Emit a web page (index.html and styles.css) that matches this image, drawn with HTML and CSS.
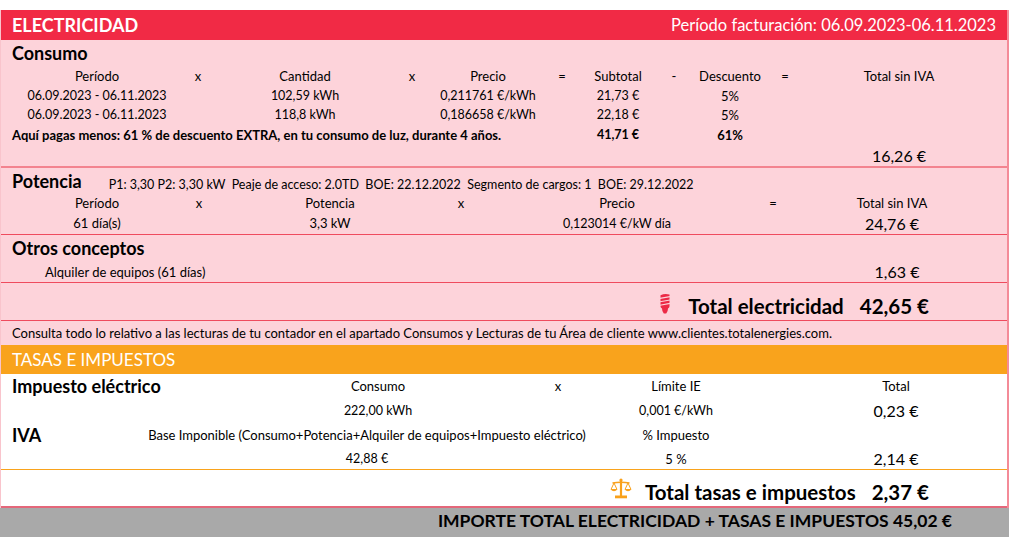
FILE: index.html
```html
<!DOCTYPE html>
<html lang="es">
<head>
<meta charset="utf-8">
<title>Electricidad</title>
<link rel="stylesheet" href="styles.css">
</head>
<body>
<div class="invoice">
  <div class="panel">
    <div class="bar-red">
      <span class="bar-title">ELECTRICIDAD</span>
      <span class="bar-period">Período facturación: 06.09.2023-06.11.2023</span>
    </div>

    <section class="sec pink sec-consumo">
      <h2 class="sec-title">Consumo</h2>
      <div class="grid g-consumo">
        <span></span><span>Período</span><span>x</span><span>Cantidad</span><span>x</span><span>Precio</span><span>=</span><span>Subtotal</span><span>-</span><span>Descuento</span><span>=</span><span>Total sin IVA</span>
        <span></span><span class="num">06.09.2023 - 06.11.2023</span><span></span><span class="num">102,59 kWh</span><span></span><span class="num">0,211761 €/kWh</span><span></span><span class="num">21,73 €</span><span></span><span>5%</span><span></span><span></span>
        <span></span><span class="num">06.09.2023 - 06.11.2023</span><span></span><span class="num">118,8 kWh</span><span></span><span class="num">0,186658 €/kWh</span><span></span><span class="num">22,18 €</span><span></span><span>5%</span><span></span><span></span>
        <span class="note">Aquí pagas menos: 61 % de descuento EXTRA, en tu consumo de luz, durante 4 años.</span><span></span><span class="b num">41,71 €</span><span></span><span class="b">61%</span><span></span><span></span>
        <span class="big col-total">16,26 €</span>
      </div>
    </section>

    <section class="sec pink sec-line">
      <div class="title-row">
        <h2 class="sec-title">Potencia</h2>
        <span class="pot-info">P1: 3,30 P2: 3,30 kW  Peaje de acceso: 2.0TD  BOE: 22.12.2022  Segmento de cargos: 1  BOE: 29.12.2022</span>
      </div>
      <div class="grid g-pot">
        <span></span><span>Período</span><span>x</span><span>Potencia</span><span>x</span><span>Precio</span><span>=</span><span>Total sin IVA</span>
        <span></span><span>61 día(s)</span><span></span><span>3,3 kW</span><span></span><span class="num">0,123014 €/kW día</span><span></span><span class="big">24,76 €</span>
      </div>
    </section>

    <section class="sec pink sec-line">
      <h2 class="sec-title">Otros conceptos</h2>
      <div class="grid g-otros">
        <span></span><span class="left">Alquiler de equipos (61 días)</span><span class="big">1,63 €</span>
      </div>
    </section>

    <section class="sec pink sec-line total-row total-el">
      <svg class="ico-bulb" viewBox="0 0 12 22" width="12" height="22" aria-hidden="true">
        <path d="M1.5 2.2 Q6 0.2 10.5 1.6 L10.5 13.2 Q10.5 14.8 9 15.4 L8.6 18 L7.2 20.6 L4.8 20.6 L3.4 18 L3 15.4 Q1.5 14.8 1.5 13.2 Z" fill="#ec2a46"/>
        <path d="M1 5.4 L11 3.6 M1 8.8 L11 7 M1 12.2 L11 10.4" stroke="#fdd3da" stroke-width="1.1"/>
      </svg>
      <span class="total-label">Total electricidad</span>
      <span class="total-value">42,65 €</span>
    </section>

    <div class="pink consulta">Consulta todo lo relativo a las lecturas de tu contador en el apartado Consumos y Lecturas de tu Área de cliente www.clientes.totalenergies.com.</div>

    <div class="bar-orange">TASAS E IMPUESTOS</div>

    <section class="sec white sec-tax">
      <div class="grid g-tax">
        <span class="tax-title">Impuesto eléctrico</span><span>Consumo</span><span></span><span>x</span><span></span><span>Límite IE</span><span></span><span>Total</span>
        <span></span><span class="num">222,00 kWh</span><span></span><span></span><span></span><span class="num">0,001 €/kWh</span><span></span><span class="big">0,23 €</span>
        <span class="tax-title">IVA</span><span class="shift">Base Imponible (Consumo+Potencia+Alquiler de equipos+Impuesto eléctrico)</span><span></span><span></span><span></span><span>% Impuesto</span><span></span><span></span>
        <span></span><span class="shift num">42,88 €</span><span></span><span></span><span></span><span>5 %</span><span></span><span class="big">2,14 €</span>
      </div>
    </section>

    <section class="sec white total-row total-tax">
      <svg class="ico-scale" viewBox="0 0 22 21" width="22" height="21" aria-hidden="true">
        <circle cx="11" cy="2" r="1.6" fill="#f9a11b"/>
        <path d="M11 2 V18" stroke="#f9a11b" stroke-width="2.2" fill="none"/>
        <path d="M2.5 5 Q11 3.4 19.5 5" stroke="#f9a11b" stroke-width="1.6" fill="none"/>
        <path d="M1.2 11 L4 5 L6.8 11 M15.2 11 L18 5 L20.8 11" stroke="#f9a11b" stroke-width="1" fill="none"/>
        <path d="M0.3 11 H7.7 Q4 15.6 0.3 11 Z M14.3 11 H21.7 Q18 15.6 14.3 11 Z" fill="#f9a11b"/>
        <rect x="5" y="17.5" width="12" height="2.8" fill="#f9a11b"/>
      </svg>
      <span class="total-label">Total tasas e impuestos</span>
      <span class="total-value">2,37 €</span>
    </section>
  </div>
  <div class="bar-grey">IMPORTE TOTAL ELECTRICIDAD + TASAS E IMPUESTOS 45,02 €</div>
</div>
</body>
</html>
```

FILE: styles.css
```css
* {
  box-sizing: border-box;
  margin: 0;
  padding: 0;
}

body {
  margin: 0;
  background: #ffffff;
  font-family: Lato, "Open Sans", sans-serif;
  font-size: 13px;
  color: #000000;
}

.invoice {
  width: 1009px;
  margin-top: 10px;
}

.panel {
  border-left: 1px solid #f9c4cc;
  border-right: 2px solid #f48b98;
}

.pink {
  background: #fdd3da;
}

.white {
  background: #ffffff;
}

/* header bars */
.bar-red {
  height: 30px;
  background: #f12a45;
  color: #ffffff;
  display: flex;
  align-items: center;
  justify-content: space-between;
  padding: 0 11px 0 11px;
}

.bar-title {
  font-size: 18px;
  font-weight: 700;
}

.bar-period {
  font-size: 16.5px;
}

.bar-orange {
  height: 29px;
  line-height: 29px;
  background: #f9a31c;
  color: #ffffff;
  font-size: 17px;
  padding-left: 11px;
}

.bar-grey {
  height: 29px;
  line-height: 25px;
  background: #a9a9a9;
  font-size: 17.5px;
  font-weight: 700;
  text-align: right;
  padding-right: 57px;
}

/* sections */
.sec-consumo {
  border-bottom: 2px solid #f3838f;
}

.sec-line {
  border-bottom: 1px solid #ef4b5e;
}

.sec-title {
  font-size: 18px;
  font-weight: 700;
  line-height: 26px;
  padding-left: 11px;
}

.title-row {
  display: flex;
  align-items: baseline;
  height: 26px;
}

.pot-info {
  white-space: pre;
  font-size: 12.5px;
  margin-left: 27px;
  position: relative;
  top: 1px;
}

.grid {
  display: grid;
  align-items: center;
}

.grid > span {
  justify-self: center;
  white-space: nowrap;
}

.grid > span.left,
.grid > span.note,
.grid > span.tax-title {
  justify-self: start;
}

.num {
  font-size: 12.5px;
}

.b {
  font-weight: 700;
}

.big {
  font-size: 16px;
}

.g-consumo {
  grid-template-columns: 21px 150px 52px 162px 52px 100px 48px 64px 48px 64px 46px 182px;
  grid-template-rows: 20px 19px 19px 21px 21px;
}

.note {
  grid-column: 1 / 7;
  padding-left: 11px;
  font-weight: 700;
}

.col-total {
  grid-column: 12;
}

.g-pot {
  grid-template-columns: 21px 150px 54px 208px 54px 258px 54px 184px;
  grid-template-rows: 18px 22px;
}

.g-otros {
  grid-template-columns: 44px 802px 100px;
  grid-template-rows: 21px;
}

.g-tax {
  grid-template-columns: 301px 152px 94px 20px 58px 100px 120px 100px;
  grid-template-rows: 24px 24px 26px 21px;
}

.sec-tax {
  border-bottom: 1px solid #f9a31c;
}

.tax-title {
  font-size: 18px;
  font-weight: 700;
  padding-left: 11px;
}

.shift {
  margin-right: 22px;
}

/* total rows */
.total-row {
  display: flex;
  align-items: center;
  justify-content: flex-end;
  height: 38px;
  padding-top: 8px;
}

.total-el {
  padding-right: 78px;
}

.total-tax {
  padding-right: 78px;
  border-bottom: 2px solid #e4677a;
}

.total-label,
.total-value {
  font-size: 20.5px;
  font-weight: 700;
}

.total-value {
  margin-left: 16px;
}

.ico-bulb {
  margin-right: 17px;
  margin-top: -4px;
}

.ico-scale {
  margin-right: 13px;
  margin-top: -8px;
}

.consulta {
  height: 24px;
  line-height: 25px;
  font-size: 13px;
  padding-left: 11px;
}
```
